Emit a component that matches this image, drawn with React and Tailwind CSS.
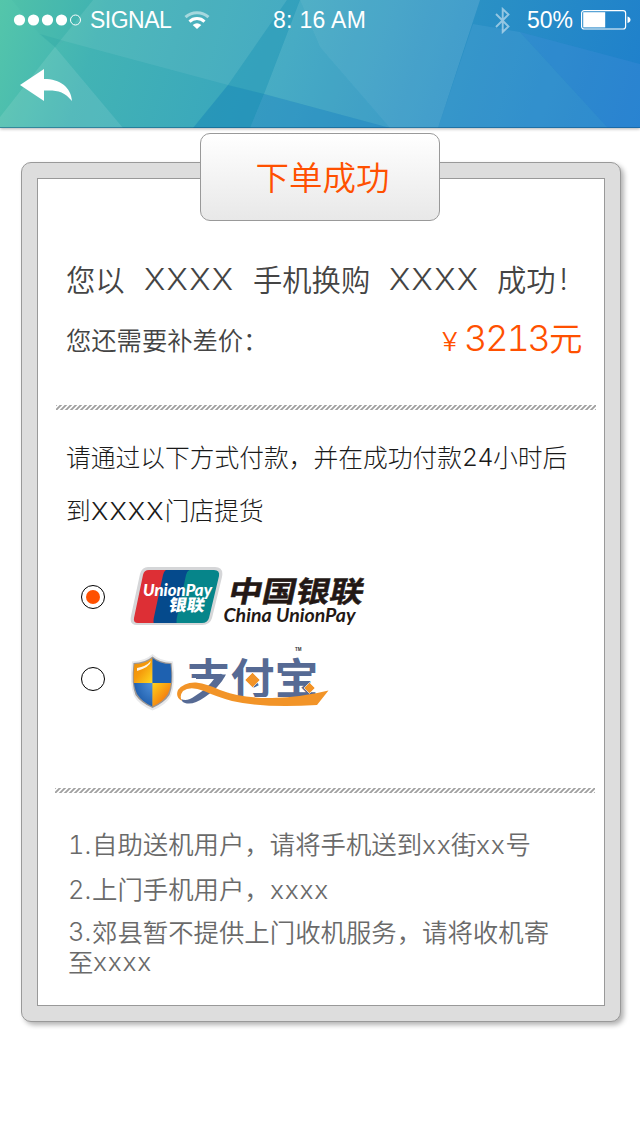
const latin = "font-['Inter','Noto_Sans_CJK_SC',sans-serif] font-light tabular-nums";

function Run({ className = "", children }) {
  return <span className={"inline-block whitespace-pre " + className}>{children}</span>;
}

function HeaderBackdrop() {
  return (
    <svg className="absolute inset-0 h-full w-full" viewBox="0 0 640 128" preserveAspectRatio="none" aria-hidden="true">
      <defs>
        <linearGradient id="hd" gradientUnits="userSpaceOnUse" x1="0" y1="0" x2="615" y2="205">
          <stop offset="0" stopColor="#54c6aa" />
          <stop offset="0.16" stopColor="#42b3b4" />
          <stop offset="0.45" stopColor="#38a4bf" />
          <stop offset="0.68" stopColor="#2b92c4" />
          <stop offset="1" stopColor="#1e7fcc" />
        </linearGradient>
      </defs>
      <rect width="640" height="128" fill="url(#hd)" />
      <polygon points="12,0 93,0 55,47 40,35" fill="#1e9aa0" opacity="0.06" />
      <polygon points="93,0 287,0 228,85 64,41 55,47" fill="#fff" opacity="0.07" />
      <polygon points="0,117 55,47 123,128 0,128" fill="#fff" opacity="0.1" />
      <polygon points="40,34 64,41 55,47" fill="#1e9aa0" opacity="0.2" />
      <polygon points="287,0 300,0 264,94 228,85" fill="#0f83b4" opacity="0.12" />
      <polygon points="228,85 264,94 250,128 193,128" fill="#0f7fb4" opacity="0.42" />
      <polygon points="300,0 480,0 438,128 390,128 320,47" fill="#fff" opacity="0.12" />
      <polygon points="300,0 320,47 390,128 264,94" fill="#fff" opacity="0.08" />
      <polygon points="264,94 390,128 250,128" fill="#2d86c9" opacity="0.35" />
      <polygon points="473,24 520,32 608,128 438,128" fill="#5aa8dc" opacity="0.25" />
      <polygon points="520,32 640,64 640,128 608,128" fill="#4a90e0" opacity="0.25" />
      <rect y="127" width="640" height="1" fill="#0a4f80" opacity="0.5" />
    </svg>
  );
}

function StatusBar() {
  return (
    <div className="relative flex h-10 items-center font-['Liberation_Sans',sans-serif] text-[23px] leading-[40px] text-white">
      <svg className="ml-[13px] h-3 w-[70px]" viewBox="0 0 70 12">
        <circle cx="6.5" cy="6" r="5.6" fill="#fff" />
        <circle cx="20.5" cy="6" r="5.6" fill="#fff" />
        <circle cx="34.5" cy="6" r="5.6" fill="#fff" />
        <circle cx="48.5" cy="6" r="5.6" fill="#fff" />
        <circle cx="62.5" cy="6" r="5" fill="none" stroke="#fff" strokeWidth="1" />
      </svg>
      <Run className="ml-[7px] w-[82px] tracking-[-0.5px]">SIGNAL</Run>
      <svg className="ml-[12px] h-[19px] w-[26px]" viewBox="0 0 26 19" fill="none" stroke="#fff">
        <path d="M1.5 6.200C8 .2 18 .2 24.500 6.200" strokeWidth="3" opacity="0.5" />
        <path d="M5.500 10.600C9.700 6.600 16.300 6.600 20.500 10.600" strokeWidth="3" />
        <path d="M8.700 14q4.300-3.600 8.600 0L13 18Z" fill="#fff" stroke="none" />
      </svg>
      <Run className="ml-[63px] w-[94px] tracking-[0.300px]">8: 16 AM</Run>
      <svg className="ml-[127px] h-[27px] w-[17px]" viewBox="0 0 17 27" fill="none" stroke="#fff" strokeWidth="1.900" opacity="0.5">
        <path d="M2 7l12.500 12.500L8.700 25V2l5.800 5.500L2 20" />
      </svg>
      <Run className="ml-[16px] w-[48px]">50%</Run>
      <svg className="ml-[6px] h-5 w-[50px]" viewBox="0 0 50 20">
        <rect x="0.6" y="0.600" width="44" height="18.400" rx="2.500" fill="none" stroke="#fff" strokeWidth="1.200" />
        <rect x="2.200" y="2.200" width="22" height="15.200" fill="#fff" />
        <path d="M46.500 6.500q3 .8 3 3.300t-3 3.300Z" fill="#fff" />
      </svg>
    </div>
  );
}

function Hatch() {
  return (
    <svg className="block h-[5px] w-[540px]" viewBox="0 0 540 5" aria-hidden="true">
      <defs>
        <pattern id="hatch" width="5" height="5" patternUnits="userSpaceOnUse">
          <path d="M-1 6L6 -1M-1 1L1 -1M4 6L6 4" stroke="#a0a0a0" strokeWidth="1.900" />
        </pattern>
      </defs>
      <rect width="540" height="5" fill="url(#hatch)" />
    </svg>
  );
}

function Radio({ checked }) {
  return (
    <span role="radio" aria-checked={checked} className="flex size-6 items-center justify-center rounded-full border border-black">
      {checked && <span className="size-[14px] rounded-full bg-[#ff5000]" />}
    </span>
  );
}

function UnionPayLogo() {
  return (
    <svg className="h-[64px] w-[240px]" viewBox="130 565 240 64">
      <defs>
        <clipPath id="upc">
          <path d="M148 570H214Q220 570 219 576L209 618Q207.500 623 202 623H138Q133 623 134 618L143 575Q144 570 149 570Z" />
        </clipPath>
      </defs>
      <path d="M148 567H215Q224 567 222 577L212 618Q210 625 202 625H137Q129 625 131 616L140 574Q142 567 148 567Z" fill="#d5d6d8" />
      <g clipPath="url(#upc)">
        <rect x="130" y="565" width="70" height="62" fill="#dd2f35" />
        <path d="M168 569H200V625H154Q153 621 154 617L163 575Q164 570 168 569Z" fill="#054a8c" />
        <path d="M192 569H224V625H177Q176 621 177 617L186 575Q187 570 192 569Z" fill="#06858a" />
      </g>
      <g fill="#fff" fontWeight="700">
        <text x="143" y="595.500" fontFamily="Lato, sans-serif" fontWeight="900" fontStyle="italic" fontSize="17.500" textLength="69" lengthAdjust="spacingAndGlyphs">UnionPay</text>
        <text transform="translate(168 611) skewX(-10)" fontFamily="Noto Sans CJK SC, sans-serif" fontWeight="900" fontSize="16.500" textLength="36" lengthAdjust="spacingAndGlyphs">银联</text>
      </g>
      <g fill="#231815">
        <text transform="translate(227 602) skewX(-12)" fontFamily="Noto Sans CJK SC, sans-serif" fontWeight="700" fontSize="29" textLength="135" lengthAdjust="spacingAndGlyphs" stroke="#231815" strokeWidth="0.500">中国银联</text>
        <text x="223.500" y="622" fontFamily="Lato, sans-serif" fontWeight="700" fontStyle="italic" fontSize="19.500" textLength="132" lengthAdjust="spacingAndGlyphs">China UnionPay</text>
      </g>
    </svg>
  );
}

function AlipayLogo() {
  return (
    <svg className="h-[70px] w-[204px]" viewBox="128 644 204 70">
      <defs>
        <clipPath id="sh">
          <path d="M152.500 658Q160 664 170.500 664Q173 684 168 694Q163 702 152.500 706.500Q142 702 137 694Q132 684 134.500 664Q145 664 152.500 658Z" />
        </clipPath>
        <clipPath id="brand">
          <path d="M184 650H232V678H184ZM228 650H322V697H228Z" />
        </clipPath>
        <linearGradient id="yo" x1="0" y1="0" x2="1" y2="1">
          <stop offset="0" stopColor="#e98a08" />
          <stop offset="0.5" stopColor="#f59a0c" />
          <stop offset="1" stopColor="#ffda20" />
        </linearGradient>
        <linearGradient id="oy" x1="0" y1="0" x2="1" y2="1">
          <stop offset="0" stopColor="#ffd21c" />
          <stop offset="0.45" stopColor="#f79412" />
          <stop offset="1" stopColor="#e5401b" />
        </linearGradient>
        <radialGradient id="bb" cx="1" cy="0" r="1">
          <stop offset="0" stopColor="#4f92dc" />
          <stop offset="1" stopColor="#1c5aa8" />
        </radialGradient>
      </defs>
      <path d="M152.500 654Q160 661 173 661.500Q176 684 171 696Q166 705 152.500 710.500Q139 705 134 696Q129 684 132 661.500Q145 661 152.500 654Z" fill="#e8e9eb" />
      <path d="M152.500 656.500Q160 663 171.500 663Q174 684 169.500 695Q164 703 152.500 708Q141 703 135.500 695Q131 684 133.500 663Q145 663 152.500 656.500Z" fill="#9b9694" />
      <g clipPath="url(#sh)">
        <rect x="132" y="656" width="20.500" height="27" fill="url(#yo)" />
        <rect x="152.500" y="656" width="22" height="27" fill="#1e61b0" />
        <rect x="132" y="683" width="20.500" height="26" fill="url(#bb)" />
        <rect x="152.500" y="683" width="22" height="26" fill="url(#oy)" />
      </g>
      <path d="M137 668Q146 666.500 151 661Q150 667 137 671Z" fill="#fff" opacity="0.9" />
      <g clipPath="url(#brand)">
        <text x="186.500" y="693.500" fill="#566a94" fontFamily="Noto Sans CJK SC, sans-serif" fontWeight="700" fontSize="42.500" textLength="132" lengthAdjust="spacingAndGlyphs">支付宝</text>
      </g>
      <path d="M196 674.500H226Q219 688 205 697Q193 705.500 185 703Q182 702 181 699Q187 702 195 696Q208 688 214 679H196Z" fill="#566a94" />
      <path d="M182 701Q175 697 178 690Q184 682 196 682.500Q208 684 220 690Q242 698.500 272 698Q303 697 328.500 690.500L317 705Q265 708.500 232 701Q216 696.500 204 691Q190 685.500 183 691Q179 696 182 701Z" fill="#f29428" />
      <path d="M252.500 672.500L260 680L252.500 687.500L245 680ZM309.500 682.500L315 688L309.500 693.500L304 688Z" fill="#f29428" stroke="#fff" strokeWidth="0.600" />
      <text x="295" y="650.500" fill="#333" fontFamily="Liberation Sans, sans-serif" fontWeight="700" fontSize="4.500">TM</text>
    </svg>
  );
}

export default function App() {
  return (
    <div className="flex h-[1136px] w-[640px] flex-col overflow-hidden bg-white font-['Noto_Sans_CJK_SC',sans-serif] font-[350]">
      <header className="relative h-32 shrink-0 shadow-[0_1px_3px_rgba(0,0,0,0.3)]">
        <HeaderBackdrop />
        <StatusBar />
        <button aria-label="返回" className="relative ml-5 mt-[28px] block">
          <svg className="block h-[34px] w-[53px]" viewBox="0 0 53 34" fill="#fff">
            <path d="M0 17L24 1V11C40 11 51 19 52 33C44 23 37 22 24 22.500V33Z" />
          </svg>
        </button>
      </header>

      <h1 className="z-10 -mb-[59px] ml-[200px] mt-[5px] flex h-[88px] w-[240px] shrink-0 items-center justify-center rounded-[10px] border border-[#999] bg-linear-to-b from-white to-[#e8e8e8] pb-[1px] pl-[5px] text-[33.500px] font-[350] text-[#ff5000]">
        下单成功
      </h1>

      <main className="ml-[21px] h-[860px] w-[600px] shrink-0 rounded-[10px] border border-[#999] bg-[#ddd] p-[15px] shadow-[3px_3px_5px_rgba(0,0,0,0.3)]">
        <div className="flex h-[828px] w-[568px] flex-col border border-[#999] bg-white">
          <p className="ml-[28px] mt-[77px] flex h-[44px] items-center whitespace-nowrap text-[29.300px] leading-[44px] text-[#444]">
            <Run className="w-[78px]">您以</Run>
            <Run className={"w-[109px] origin-left scale-x-[1.08] pt-[2px] text-[29.800px] tracking-[1.200px] " + latin}>XXXX</Run>
            <Run className="w-[136px]">手机换购</Run>
            <Run className={"w-[108px] origin-left scale-x-[1.08] pt-[2px] text-[29.800px] tracking-[1.200px] " + latin}>XXXX</Run>
            <Run>成功</Run>
            <Run className={"ml-[4px] pt-[3px] " + latin}>!</Run>
          </p>
          <p className="ml-[28px] mt-[17px] flex h-[46px] items-center whitespace-nowrap text-[25.300px] text-[#444]">
            <Run className="w-[376px]">您还需要补差价：</Run>
            <span className="-mt-[5px] flex items-baseline text-[#ff5000]">
              <Run className={"w-[22px] origin-left scale-x-[1.15] text-[25px] " + latin}>¥</Run>
              <Run className={"w-[85px] text-[36px] leading-[46px] tracking-[-2.100px] " + latin}>3213</Run>
              <Run className="text-[33.500px] leading-[46px]">元</Run>
            </span>
          </p>
          <div className="ml-[18px] mt-[42px]"><Hatch /></div>
          <div className="ml-[28px] mt-[20px] text-[24.750px] font-light leading-[53px] text-[#1a1a1a]">
            <p className="flex whitespace-nowrap">
              <Run>请通过以下方式付款，并在成功付款</Run>
              <Run className={"w-[31px] pt-[1px] tracking-[-0.500px] " + latin}>24</Run>
              <Run>小时后</Run>
            </p>
            <p className="-mt-[1px] flex whitespace-nowrap">
              <Run>到</Run>
              <Run className={"w-[74px] origin-left scale-x-[1.06] pt-[2px] tracking-[1px] " + latin}>XXXX</Run>
              <Run>门店提货</Run>
            </p>
          </div>
          <div role="radiogroup" className="ml-[43px] mt-[27px] flex flex-col">
            <div className="flex h-[64px] items-center gap-[25px]"><Radio checked /><UnionPayLogo /></div>
            <div className="mt-[15px] flex h-[70px] items-center gap-[23px]"><Radio checked={false} /><AlipayLogo /></div>
          </div>
          <div className="ml-[17px] mt-[74px]"><Hatch /></div>
          <div className="ml-[30px] mt-[28px] text-[25.400px] leading-[45px] text-[#6a6a6a]">
            <p className="flex whitespace-nowrap">
              <Run className={"w-[24px] pt-[1px] " + latin}>1.</Run>
              <Run>自助送机用户，请将手机送到</Run>
              <Run className={"w-[29px] origin-left scale-x-[1.04] pt-[1px] tracking-[0.600px] " + latin}>xx</Run>
              <Run>街</Run>
              <Run className={"w-[29px] origin-left scale-x-[1.04] pt-[1px] tracking-[0.600px] " + latin}>xx</Run>
              <Run>号</Run>
            </p>
            <p className="-mt-[1px] flex whitespace-nowrap">
              <Run className={"w-[24px] pt-[1px] " + latin}>2.</Run>
              <Run>上门手机用户，</Run>
              <Run className={"origin-left scale-x-[1.04] pt-[1px] tracking-[0.700px] " + latin}>xxxx</Run>
            </p>
            <p className="mt-[4px] flex whitespace-nowrap leading-[30px]">
              <Run className={"w-[24px] pt-[1px] " + latin}>3.</Run>
              <Run>郊县暂不提供上门收机服务，请将收机寄</Run>
            </p>
            <p className="-mt-[1px] flex whitespace-nowrap leading-[30px]">
              <Run>至</Run>
              <Run className={"origin-left scale-x-[1.04] pt-[1px] tracking-[0.700px] " + latin}>xxxx</Run>
            </p>
          </div>
        </div>
      </main>
    </div>
  );
}
